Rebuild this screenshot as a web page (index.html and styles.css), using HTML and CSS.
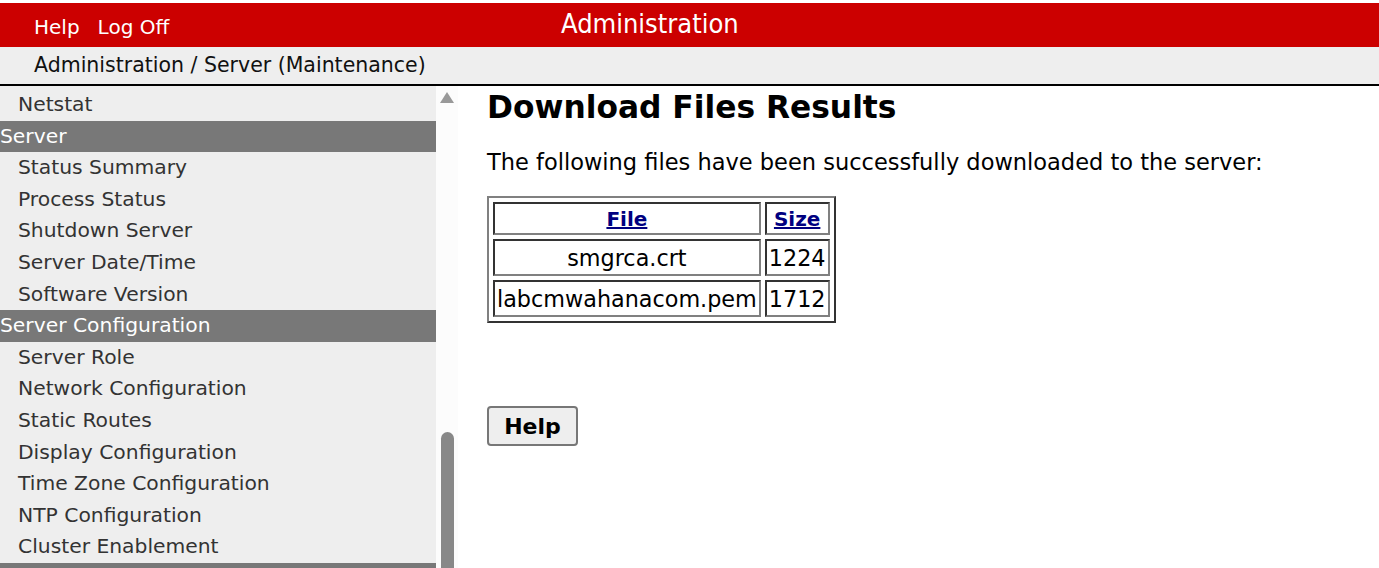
FILE: index.html
```html
<!DOCTYPE html>
<html>
<head>
<meta charset="utf-8">
<link rel="stylesheet" href="styles.css">
</head>
<body>
<div class="topbar">
  <div class="toplinks"><span>Help</span><span>Log Off</span></div>
  <div class="apptitle">Administration</div>
</div>
<div class="crumb">Administration / Server (Maintenance)</div>
<div class="layout">
  <nav class="sidebar">
    <div class="item">Netstat</div>
    <div class="group">Server</div>
    <div class="item">Status Summary</div>
    <div class="item">Process Status</div>
    <div class="item">Shutdown Server</div>
    <div class="item">Server Date/Time</div>
    <div class="item">Software Version</div>
    <div class="group">Server Configuration</div>
    <div class="item">Server Role</div>
    <div class="item">Network Configuration</div>
    <div class="item">Static Routes</div>
    <div class="item">Display Configuration</div>
    <div class="item">Time Zone Configuration</div>
    <div class="item">NTP Configuration</div>
    <div class="item">Cluster Enablement</div>
    <div class="group group-last"></div>
  </nav>
  <div class="scrollbar">
    <div class="arrow"></div>
    <div class="thumb"></div>
  </div>
  <main class="main">
    <h1>Download Files Results</h1>
    <p class="msg">The following files have been successfully downloaded to the server:</p>
    <table class="files">
      <tr><th><a href="#">File</a></th><th><a href="#">Size</a></th></tr>
      <tr><td class="name">smgrca.crt</td><td>1224</td></tr>
      <tr><td class="name">labcmwahanacom.pem</td><td>1712</td></tr>
    </table>
    <button class="helpbtn">Help</button>
  </main>
</div>
</body>
</html>
```
FILE: styles.css
```css
html, body { margin: 0; padding: 0; background: #fff; }
body {
  padding-top: 3px;
  font-family: "DejaVu Sans", Verdana, sans-serif;
  color: #000;
  height: 565px;
  overflow: hidden;
}
.topbar {
  height: 44px;
  background: #cc0000;
  color: #fff;
  display: flex;
  align-items: flex-start;
}
.toplinks {
  padding-left: 34px;
  padding-top: 12px;
  font-size: 20px;
  display: flex;
  gap: 18px;
  box-sizing: border-box;
  width: 561px;
}
.apptitle {
  font-family: "DejaVu Sans Condensed", "DejaVu Sans", sans-serif;
  font-size: 27px;
  padding-top: 5px;
}
.crumb {
  height: 37px;
  background: #eeeeee;
  border-bottom: 2px solid #000;
  font-size: 20.5px;
  padding-left: 34px;
  line-height: 36px;
  color: #111;
}
.layout {
  display: flex;
  height: 482px;
  overflow: hidden;
}
.sidebar {
  width: 436px;
  flex: none;
  background: #eeeeee;
  padding-top: 3px;
  font-size: 20.3px;
  color: #333;
}
.item {
  height: 31.6px;
  line-height: 31.6px;
  padding-left: 18px;
  white-space: nowrap;
}
.group {
  height: 31.6px;
  line-height: 31.6px;
  background: #787878;
  color: #fff;
  white-space: nowrap;
}
.scrollbar {
  width: 22px;
  flex: none;
  background: #fcfcfc;
  position: relative;
}
.arrow {
  position: absolute;
  left: 4px;
  top: 6px;
  width: 0;
  height: 0;
  border-left: 7px solid transparent;
  border-right: 7px solid transparent;
  border-bottom: 11px solid #999;
}
.thumb {
  position: absolute;
  left: 5px;
  top: 346px;
  width: 13px;
  height: 200px;
  background: #888;
  border-radius: 7px 7px 0 0;
}
.main {
  flex: 1;
  padding-left: 29px;
}
h1 {
  font-size: 31.3px;
  font-weight: bold;
  margin: 1px 0 0 0;
  line-height: 40px;
}
.msg {
  font-size: 22.5px;
  margin: 21px 0 0 0;
  line-height: 28px;
}
.files {
  margin-top: 20px;
  border: 2px solid;
  border-color: #808080 #333 #333 #808080;
  border-spacing: 4px;
}
.files th, .files td {
  border: 2px solid;
  border-color: #333 #808080 #808080 #333;
  padding: 0 2px;
  text-align: center;
}
.files th {
  height: 29px;
  font-size: 20px;
  font-weight: bold;
}
.files th a { color: #000080; text-decoration: underline; }
.files td {
  height: 33px;
  font-size: 22.3px;
}
.helpbtn {
  display: block;
  margin-top: 83px;
  width: 91px;
  height: 40px;
  background: #eeeeee;
  border: 2px solid #777;
  border-radius: 4px;
  font-family: "DejaVu Sans", sans-serif;
  font-weight: bold;
  font-size: 22px;
  color: #000;
  padding: 0;
}
```
